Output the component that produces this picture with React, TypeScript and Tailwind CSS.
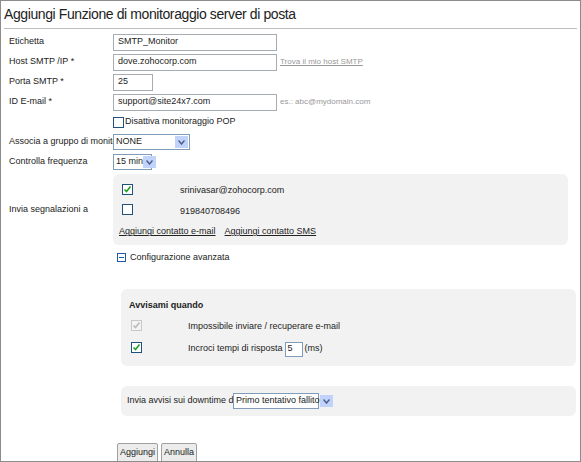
import React from "react";

const Chk = ({ on, dim }: { on?: boolean; dim?: boolean }) => (
  <span className={`inline-flex h-[11px] w-[11px] items-center justify-center border ${dim ? "border-[#c8c8c8] bg-[#f4f4f4]" : "border-[#1c5180] bg-white"}`}>
    {on && (
      <svg width="9" height="9" viewBox="0 0 9 9"><path d="M1.5 4.5 L3.5 6.5 L7.5 1.5" stroke={dim ? "#bbb" : "#21a121"} strokeWidth="1.6" fill="none" /></svg>
    )}
  </span>
);

const Sel = ({ w, v }: { w: string; v: string }) => (
  <div className={`flex h-[16px] ${w} items-center justify-between whitespace-nowrap border border-[#7f9db9] bg-white pl-[2px]`}>
    <span>{v}</span>
    <span className="mr-[1px] flex h-[12px] w-[13px] shrink-0 items-center justify-center bg-[#c1d3fb]">
      <svg width="7" height="5" viewBox="0 0 7 5"><path d="M0.5 0.5 L3.5 4 L6.5 0.5" stroke="#4d6185" strokeWidth="1.5" fill="none" /></svg>
    </span>
  </div>
);

const Inp = ({ w, v }: { w: string; v: string }) => (
  <div className={`flex h-[17px] ${w} items-center border border-[#a5acb2] bg-white pl-[4px]`}>{v}</div>
);

const Row = ({ label, children }: { label: string; children?: React.ReactNode }) => (
  <div className="flex h-[20px] items-center">
    <div className="w-[112px] pl-[8px]">{label}</div>
    {children}
  </div>
);

export default function App() {
  return (
    <div className="h-[462px] w-[581px] overflow-hidden whitespace-nowrap border border-[#8c8c8c] bg-white text-[9px] text-[#222]" style={{ fontFamily: "'Liberation Sans', Arial, sans-serif" }}>
      <div className="mx-[3px] border-b border-[#bdbdbd] pb-[3px] pt-[3px] text-[14px] tracking-[-0.4px]">
        Aggiungi Funzione di monitoraggio server di posta
      </div>
      <div className="pt-[3px]">
        <Row label="Etichetta"><Inp w="w-[164px]" v="SMTP_Monitor" /></Row>
        <Row label="Host SMTP /IP  *">
          <Inp w="w-[164px]" v="dove.zohocorp.com" />
          <span className="ml-[3px] text-[8px] text-[#999] underline">Trova il mio host SMTP</span>
        </Row>
        <Row label="Porta SMTP *"><Inp w="w-[40px]" v="25" /></Row>
        <Row label="ID E-mail *">
          <Inp w="w-[164px]" v="support@site24x7.com" />
          <span className="ml-[3px] text-[8px] text-[#999]">es.: abc@mydomain.com</span>
        </Row>
        <Row label="">
          <Chk />
          <span className="ml-[1px]">Disattiva monitoraggio POP</span>
        </Row>
        <Row label="Associa a gruppo di monitoraggio"><Sel w="w-[77px]" v="NONE" /></Row>
        <Row label="Controlla frequenza"><Sel w="w-[39px]" v="15 min" /></Row>
        <div className="flex">
          <div className="w-[112px] pl-[8px] pt-[31px]">Invia segnalazioni a</div>
          <div className="mt-[2px] w-[455px] rounded-[6px] bg-[#f2f2f2] px-[6px] pb-[4px] pt-[8px]">
            <div className="flex h-[18px] items-center"><span className="ml-[3px] w-[58px]"><Chk on /></span>srinivasar@zohocorp.com</div>
            <div className="mt-[3px] flex h-[18px] items-center"><span className="ml-[3px] w-[58px]"><Chk /></span>919840708496</div>
            <div className="mt-[2px] flex h-[18px] items-center gap-[9px] underline"><span>Aggiungi contatto e-mail</span><span>Aggiungi contatto SMS</span></div>
          </div>
        </div>
        <div className="ml-[116px] mt-[6px] flex items-center gap-[4px]">
          <span className="flex h-[9px] w-[9px] items-center justify-center border border-[#1e5aa8]"><span className="h-[1px] w-[5px] bg-[#1e5aa8]" /></span>
          Configurazione avanzata
        </div>
        <div className="ml-[120px] mt-[24px] w-[455px] rounded-[6px] bg-[#f2f2f2] px-[8px] pb-[8px] pt-[10px]">
          <div className="mb-[6px] font-bold">Avvisami quando</div>
          <div className="flex h-[18px] items-center"><span className="ml-[2px] w-[57px]"><Chk on dim /></span>Impossibile inviare / recuperare e-mail</div>
          <div className="mt-[4px] flex h-[18px] items-center">
            <span className="ml-[2px] w-[57px]"><Chk on /></span>Incroci tempi di risposta
            <span className="mx-[2px] flex h-[15px] w-[18px] items-center border border-[#7f9db9] bg-white pl-[2px]">5</span>(ms)
          </div>
        </div>
        <div className="ml-[120px] mt-[20px] flex h-[30px] w-[455px] items-center rounded-[6px] bg-[#f2f2f2] px-[6px]">
          <span className="w-[106px]">Invia avvisi sui downtime dopo</span>
          <Sel w="w-[86px]" v="Primo tentativo fallito" />
        </div>
        <div className="ml-[116px] mt-[27px] flex gap-[3px]">
          <button className="h-[20px] rounded-[2px] border border-[#a0a0a0] bg-[#ececec] px-[2px] text-[9px]">Aggiungi</button>
          <button className="h-[20px] rounded-[2px] border border-[#a0a0a0] bg-[#ececec] px-[2px] text-[9px]">Annulla</button>
        </div>
      </div>
    </div>
  );
}
